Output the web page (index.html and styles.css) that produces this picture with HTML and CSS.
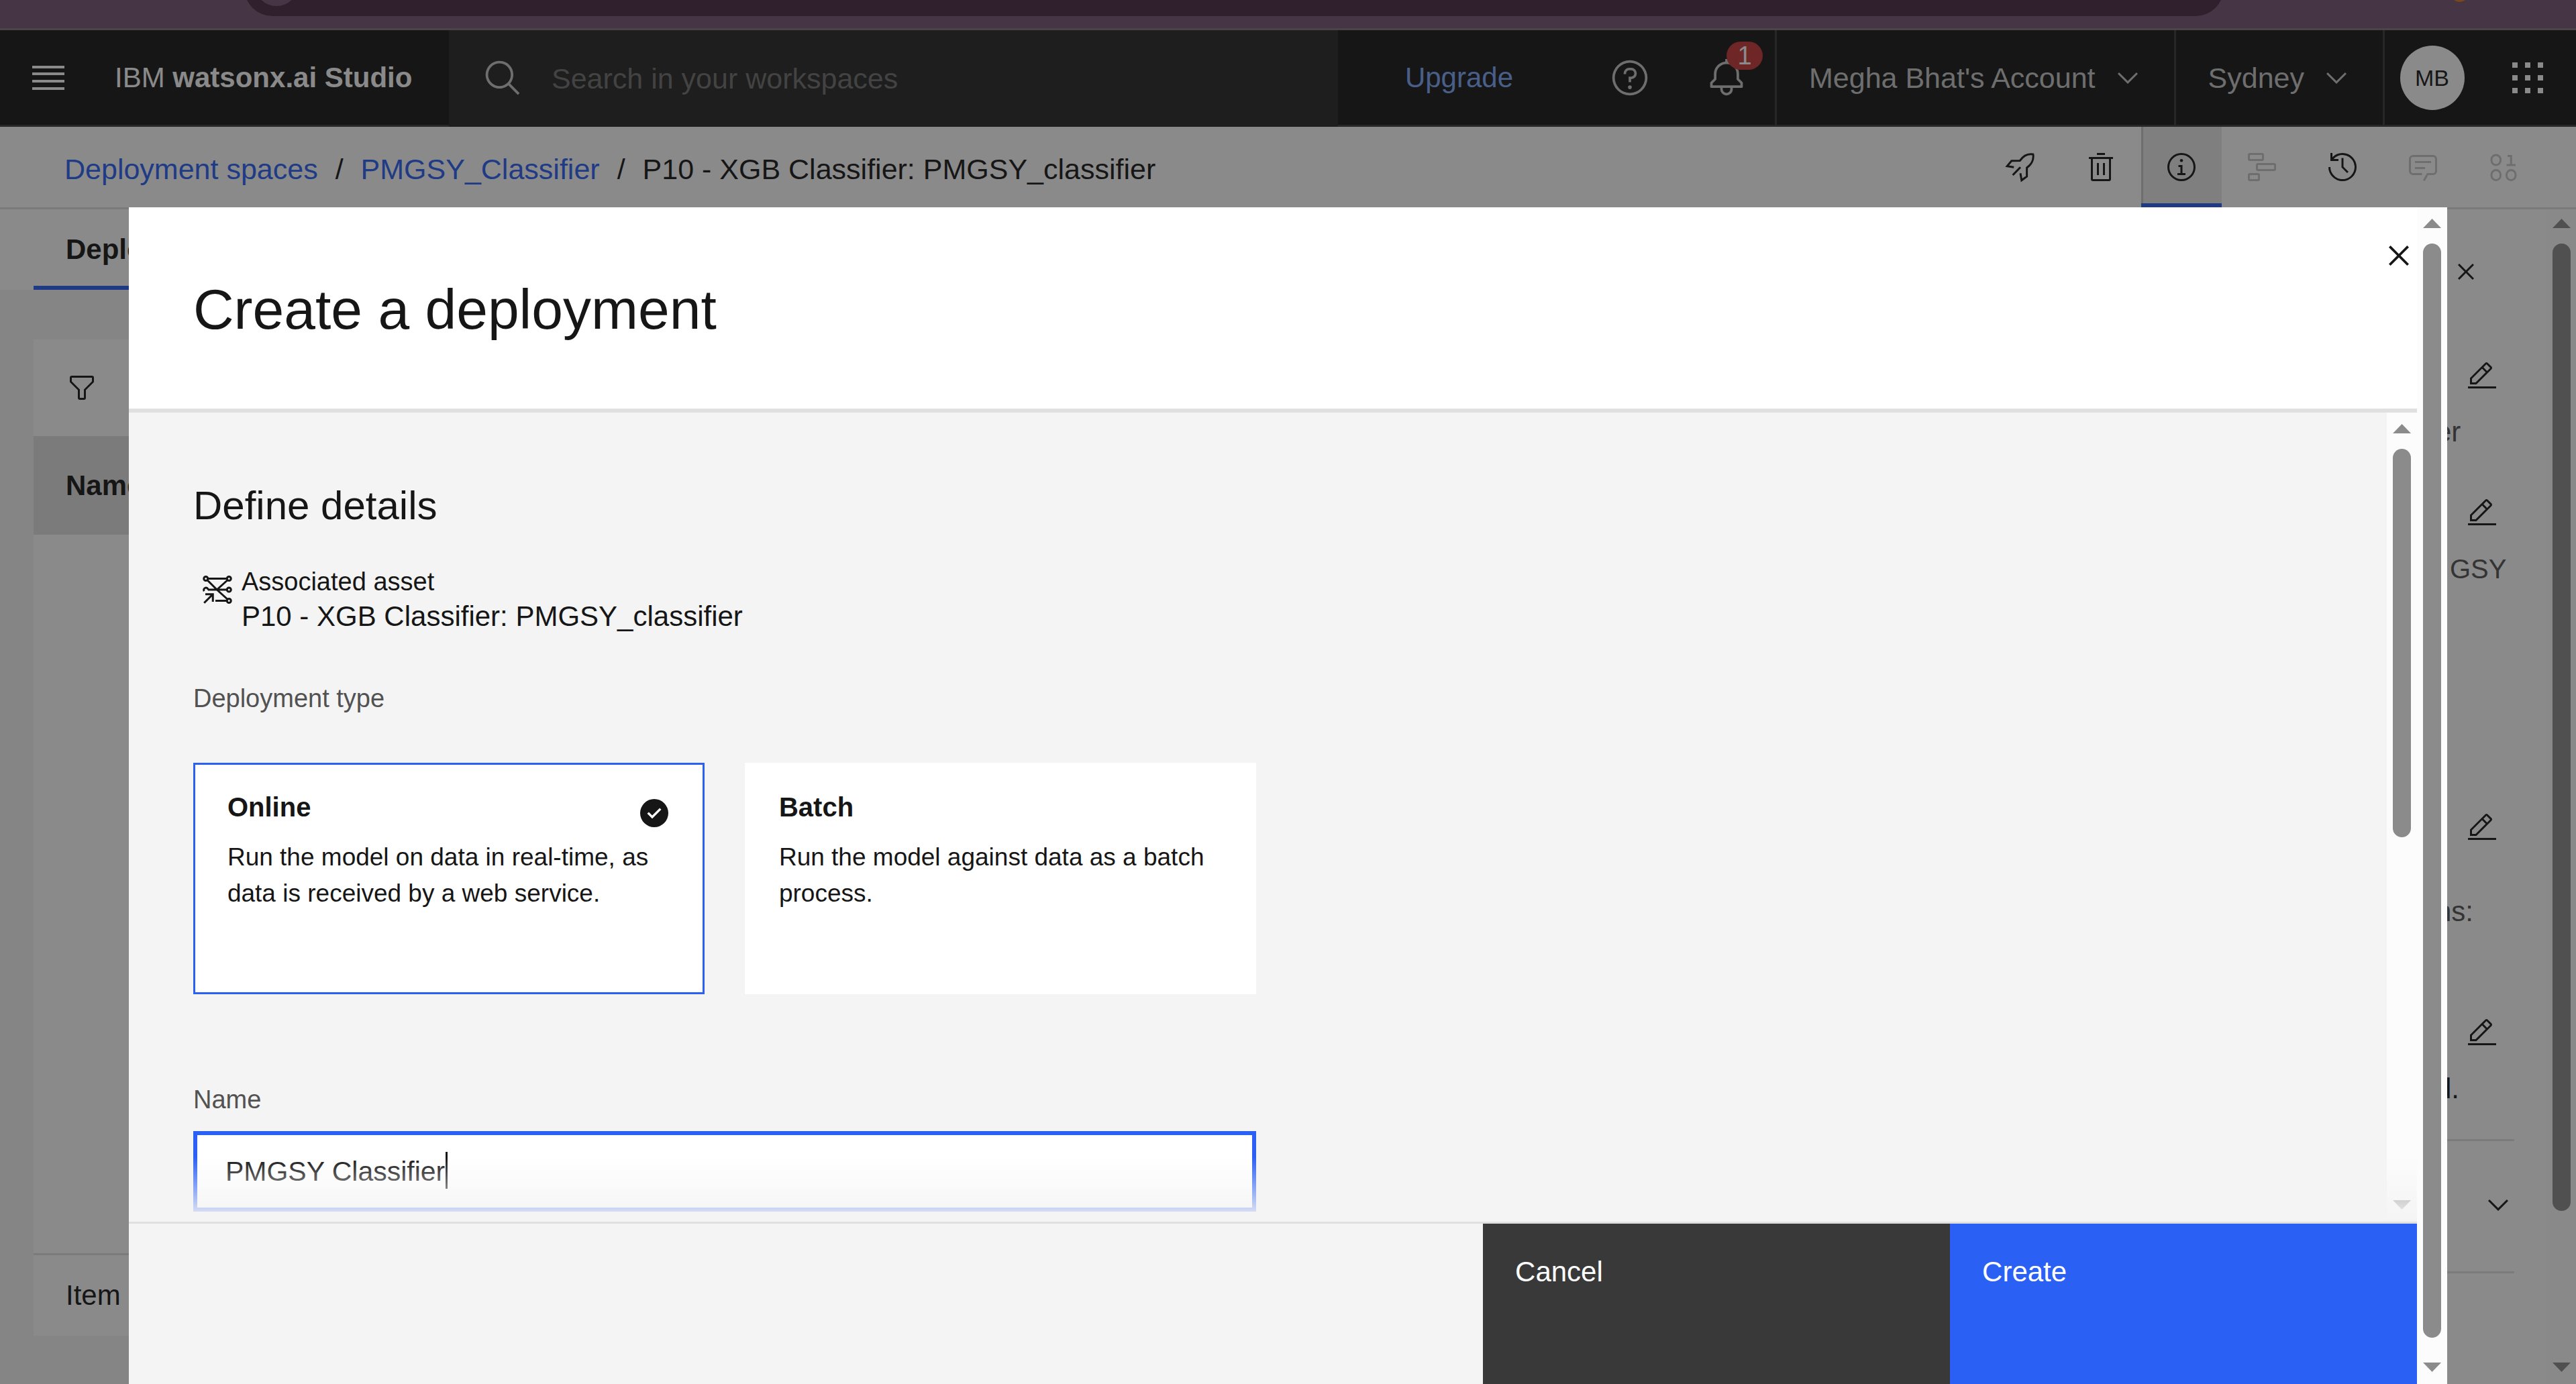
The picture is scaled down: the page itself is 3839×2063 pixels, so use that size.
FILE: index.html
```html
<!DOCTYPE html>
<html lang="en">
<head>
<meta charset="utf-8">
<title>IBM watsonx.ai Studio</title>
<link rel="stylesheet" href="styles.css">
</head>
<body>
<svg class="sprite" aria-hidden="true">
  <symbol id="i-close" viewBox="0 0 32 32"><path d="M17.4 16 24 9.4 22.6 8 16 14.6 9.4 8 8 9.4 14.6 16 8 22.6 9.4 24 16 17.4 22.6 24 24 22.6z"/></symbol>
  <symbol id="i-chevron" viewBox="0 0 32 32"><path d="M16 22 6 12 7.4 10.6 16 19.2 24.6 10.6 26 12z"/></symbol>
  <symbol id="i-edit" viewBox="0 0 32 32"><path d="M2 26h28v2H2zM25.4 9c.8-.8.8-2 0-2.8l-3.6-3.6c-.8-.8-2-.8-2.8 0l-15 15V24h6.4L25.4 9zM20.4 4 24 7.6l-3 3L17.4 7 20.4 4zM6 22v-3.6l10-10 3.6 3.6-10 10H6z"/></symbol>
</svg>

<div class="browser-strip">
  <div class="address-bar"><span class="site-chip"></span></div>
  <span class="extension-dot"></span>
</div>

<header class="header">
  <button class="icon-button" aria-label="Menu">
    <svg class="icon-lg" viewBox="0 0 60 60"><path d="M6 12h48v4H6zM6 22h48v4H6zM6 33h48v4H6zM6 44h48v4H6z"/></svg>
  </button>
  <a class="brand" href="#">IBM <b>watsonx.ai Studio</b></a>
  <label class="search">
    <svg class="icon-lg" viewBox="0 0 32 32"><path d="M29 27.586l-7.552-7.552a11.018 11.018 0 1 0-1.414 1.414L27.586 29ZM4 13a9 9 0 1 1 9 9 9.01 9.01 0 0 1-9-9Z"/></svg>
    <input class="search-input" type="search" placeholder="Search in your workspaces" aria-label="Search in your workspaces">
  </label>
  <a class="upgrade" href="#">Upgrade</a>
  <button class="icon-button muted" aria-label="Help">
    <svg class="icon-lg" viewBox="0 0 32 32"><path d="M16 2a14 14 0 1 0 14 14A14 14 0 0 0 16 2Zm0 26a12 12 0 1 1 12-12 12 12 0 0 1-12 12Z"/><circle cx="16" cy="23.5" r="1.5"/><path d="M17 8h-1.500A4.490 4.490 0 0 0 11 12.500V13h2v-.5A2.500 2.500 0 0 1 15.500 10H17a2.500 2.500 0 0 1 0 5h-2v4.500h2V17a4.500 4.500 0 0 0 0-9Z"/></svg>
  </button>
  <button class="icon-button muted" aria-label="Notifications">
    <svg class="icon-lg" viewBox="0 0 32 32"><path d="M28.700 19.300 26 16.600V13a10 10 0 0 0-9-9.950V1H15V3.050A10 10 0 0 0 6 13v3.600L3.300 19.300A1 1 0 0 0 3 20v3a1 1 0 0 0 1 1h7v.8a5.150 5.150 0 0 0 4.500 5.200A5 5 0 0 0 21 25V24h7a1 1 0 0 0 1-1V20A1 1 0 0 0 28.700 19.300ZM19 25a3 3 0 0 1-6 0V24h6Zm8-3H5V20.400L7.700 17.700A1 1 0 0 0 8 17V13a8 8 0 0 1 16 0v4a1 1 0 0 0 .3.7L27 20.400Z"/></svg>
    <span class="badge">1</span>
  </button>
  <button class="header-menu">Megha Bhat's Account <svg class="icon"><use href="#i-chevron"/></svg></button>
  <button class="header-menu">Sydney <svg class="icon"><use href="#i-chevron"/></svg></button>
  <button class="icon-button divided" aria-label="Profile"><span class="avatar">MB</span></button>
  <button class="icon-button" aria-label="App switcher">
    <svg class="icon-lg" viewBox="0 0 60 60"><path d="M7 7h8v8H7zM26 7h8v8h-8zM45 7h8v8h-8zM7 26h8v8H7zM26 26h8v8h-8zM45 26h8v8h-8zM7 45h8v8H7zM26 45h8v8h-8zM45 45h8v8h-8z"/></svg>
  </button>
</header>

<div class="toolbar">
  <nav class="breadcrumb" aria-label="Breadcrumb">
    <a href="#">Deployment spaces</a><span>/</span><a href="#">PMGSY_Classifier</a><span>/</span><span>P10 - XGB Classifier: PMGSY_classifier</span>
  </nav>
  <div class="actions">
    <button class="action" aria-label="Deploy"><svg class="icon line" viewBox="0 0 32 32"><path d="M9.500 16.200 2.800 15.100 7.200 9.800l8.400-.2C19 4.500 23.500 2.500 28.600 3.300 29.500 8.500 27 13.500 22.400 16.700v8.600L17.200 29.200 16 22.200M16 16.200 8.400 24"/></svg></button>
    <button class="action" aria-label="Delete"><svg class="icon" viewBox="0 0 32 32"><path d="M12 12h2v12h-2zM18 12h2v12h-2zM4 6v2h2v20a2 2 0 0 0 2 2h16a2 2 0 0 0 2-2V8h2V6ZM8 28V8h16v20ZM12 2h8v2h-8z"/></svg></button>
    <button class="action selected" aria-label="Information"><svg class="icon" viewBox="0 0 32 32"><path d="M17 22v-8h-4v2h2v6h-3v2h8v-2zM16 2a14 14 0 1 0 14 14A14 14 0 0 0 16 2Zm0 26a12 12 0 1 1 12-12 12 12 0 0 1-12 12Z"/><circle cx="16" cy="9.5" r="1.5"/></svg></button>
    <button class="action" disabled aria-label="Lineage"><svg class="icon line" viewBox="0 0 32 32"><rect x="3" y="3" width="14" height="6" rx="1"/><rect x="11" y="13" width="18" height="6" rx="1"/><rect x="3" y="23" width="10" height="6" rx="1"/></svg></button>
    <button class="action" aria-label="History"><svg class="icon" viewBox="0 0 32 32"><path d="M20.600 22 15 16.400V7h2v8.600l5 5zM16 2A13.900 13.900 0 0 0 6 6.200V2H4v8h8V8H7.100A12 12 0 1 1 4 16H2A14 14 0 1 0 16 2Z"/></svg></button>
    <button class="action" disabled aria-label="Comments"><svg class="icon" viewBox="0 0 32 32"><path d="M17.740 30 16 29l4-7h6a2 2 0 0 0 2-2V8a2 2 0 0 0-2-2H6A2 2 0 0 0 4 8V20a2 2 0 0 0 2 2h9v2H6a4 4 0 0 1-4-4V8A4 4 0 0 1 6 4H26a4 4 0 0 1 4 4V20a4 4 0 0 1-4 4H21.160ZM8 10h16v2H8zM8 16h10v2H8z"/></svg></button>
    <button class="action" disabled aria-label="Data"><svg class="icon line" viewBox="0 0 32 32"><rect x="4" y="4" width="9" height="10" rx="4.500"/><rect x="4" y="19" width="9" height="10" rx="4.500"/><rect x="19" y="19" width="9" height="10" rx="4.500"/><path d="M20 5h3.500v9M19 14h9"/></svg></button>
  </div>
</div>

<main class="workspace">
  <section class="deployments">
    <div class="tabs" role="tablist"><button class="tab" role="tab" aria-selected="true">Deployments</button></div>
    <div class="list">
      <div class="list-tools"><button class="filter" aria-label="Filter"><svg class="icon" viewBox="0 0 32 32"><path d="M18 28H14a2 2 0 0 1-2-2V18.400L4.600 11A2 2 0 0 1 4 9.600V6A2 2 0 0 1 6 4H26a2 2 0 0 1 2 2V9.600A2 2 0 0 1 27.400 11L20 18.400V26A2 2 0 0 1 18 28ZM6 6V9.600l8 8V26h4V17.600l8-8V6Z"/></svg></button></div>
      <table class="list-table"><thead><tr><th scope="col">Name</th></tr></thead></table>
      <div class="pagination">Item</div>
    </div>
  </section>
  <aside class="info">
    <button class="info-close" aria-label="Close panel"><svg class="icon"><use href="#i-close"/></svg></button>
    <div class="info-item"><button class="edit" aria-label="Edit name"><svg class="icon"><use href="#i-edit"/></svg></button><p>er</p></div>
    <div class="info-item tall"><button class="edit" aria-label="Edit description"><svg class="icon"><use href="#i-edit"/></svg></button><p class="wrapped">GSY</p></div>
    <div class="info-item roomy"><button class="edit" aria-label="Edit details"><svg class="icon"><use href="#i-edit"/></svg></button><p>ns:</p></div>
    <div class="info-item last"><button class="edit" aria-label="Edit tags"><svg class="icon"><use href="#i-edit"/></svg></button><p class="strong">d.</p></div>
    <button class="info-section" aria-label="Expand section"><svg class="icon"><use href="#i-chevron"/></svg></button>
  </aside>
  <div class="scrollbar dark" aria-hidden="true"><i class="up"></i><i class="thumb thumb-page"></i><i class="rest rest-page"></i><i class="down"></i></div>
</main>

<div class="overlay">
  <div class="modal" role="dialog" aria-modal="true" aria-labelledby="modal-title">
    <div class="modal-main">
      <header class="modal-header">
        <h1 id="modal-title">Create a deployment</h1>
        <button class="modal-close" aria-label="Close"><svg class="icon-lg"><use href="#i-close"/></svg></button>
      </header>
      <div class="modal-body">
        <form class="form" id="deploy-form">
          <h2>Define details</h2>
          <div class="asset">
            <svg class="icon line" viewBox="0 0 32 32"><circle cx="4.500" cy="5" r="2"/><circle cx="27.500" cy="5" r="2"/><circle cx="27.500" cy="16" r="2"/><circle cx="27.500" cy="27" r="2"/><path d="M6.500 5h19M6 6.500 15.500 16 26 6.500M6.500 16h19M15.500 16 26 25.500M14 27h11.500M2.800 17.500A2.200 2.200 0 1 1 6.800 16M4 20.500h7.500V28M11.500 20.500 2.800 29.200"/></svg>
            <div><p class="asset-label">Associated asset</p><p class="asset-name">P10 - XGB Classifier: PMGSY_classifier</p></div>
          </div>
          <fieldset class="types">
            <legend class="label">Deployment type</legend>
            <div class="cards">
              <label class="card">
                <input class="card-radio" type="radio" name="type" checked>
                <span class="card-title">Online</span>
                <span class="card-text">Run the model on data in real-time, as data is received by a web service.</span>
                <svg class="icon card-check" viewBox="0 0 32 32"><path fill-rule="evenodd" d="M16 2a14 14 0 1 0 14 14A14 14 0 0 0 16 2Zm-2 19.500L9 16.540 10.590 15 14 18.350 21.410 11 23 12.580z"/></svg>
              </label>
              <label class="card">
                <input class="card-radio" type="radio" name="type">
                <span class="card-title">Batch</span>
                <span class="card-text">Run the model against data as a batch process.</span>
                <svg class="icon card-check" viewBox="0 0 32 32"><circle cx="16" cy="16" r="14"/></svg>
              </label>
            </div>
          </fieldset>
          <label class="label name-label" for="name">Name</label>
          <div class="name-field">
            <input class="name-input" id="name" type="text" value="PMGSY Classifier">
            <span class="caret"></span>
          </div>
        </form>
        <div class="scrollbar" aria-hidden="true"><i class="up"></i><i class="thumb thumb-form"></i><i class="rest rest-form"></i><i class="down"></i></div>
        <div class="fade"></div>
      </div>
      <footer class="modal-footer">
        <button class="footer-button cancel" type="button">Cancel</button>
        <button class="footer-button create" type="submit" form="deploy-form">Create</button>
      </footer>
    </div>
    <div class="scrollbar" aria-hidden="true"><i class="up"></i><i class="thumb thumb-modal"></i><i class="rest rest-modal"></i><i class="down"></i></div>
  </div>
</div>
</body>
</html>
```
FILE: styles.css
```css
* { box-sizing: border-box; }

html, body { margin: 0; height: 100%; }

body {
  display: flex;
  flex-direction: column;
  overflow: hidden;
  background: #fff;
  color: #161616;
  font-family: "Liberation Sans", Arial, sans-serif;
  font-size: 42px;
  line-height: 54px;
}

h1, h2, p, fieldset, legend { margin: 0; padding: 0; border: 0; font-weight: 400; }
button, input { margin: 0; padding: 0; border: 0; border-radius: 0; background: none; color: inherit; font: inherit; }
a { color: inherit; text-decoration: none; }

.sprite { position: absolute; width: 0; height: 0; }
.icon, .icon-lg { display: block; flex: none; fill: currentColor; }
.icon { width: 48px; height: 48px; }
.icon-lg { width: 60px; height: 60px; }
.line { fill: none; stroke: currentColor; stroke-width: 2; }

/* Browser edge */
.browser-strip {
  display: flex;
  flex: none;
  justify-content: space-between;
  height: 45px;
  padding: 0 161px 0 364px;
  overflow: hidden;
  border-bottom: 3px solid #7e747c;
  background: #765472;
}
.address-bar { flex: 1; height: 84px; margin: -60px 339px 0 0; border-radius: 42px; background: #4a2a46; }
.site-chip { display: block; width: 66px; height: 66px; margin: 3px 0 0 15px; border-radius: 50%; background: #765472; }
.extension-dot { width: 25px; height: 24px; margin-top: -21px; border-radius: 50%; background: #e07a1c; }

/* Product header */
.header {
  display: flex;
  flex: none;
  align-items: stretch;
  height: 144px;
  border-bottom: 3px solid #393939;
  background: #161616;
  color: #fff;
}
.icon-button { position: relative; display: grid; place-items: center; width: 144px; }
.muted { color: #c6c6c6; }
.brand { width: 525px; padding-left: 27px; line-height: 141px; white-space: nowrap; }
.search { display: flex; flex: 1; align-items: center; gap: 42px; margin-bottom: -3px; padding: 0 51px; background: #262626; color: #c6c6c6; }
.search-input { flex: 1; height: 60px; outline: 0; font-size: 43px; }
.search-input::placeholder { color: #707070; opacity: 1; }
.upgrade { margin: 0 102px 0 100px; color: #7ea8fb; line-height: 141px; }
.badge {
  position: absolute;
  top: 17px;
  right: 18px;
  width: 54px;
  height: 42px;
  border-radius: 21px;
  background: #c83638;
  color: #fff;
  font-size: 38px;
  line-height: 42px;
  text-align: center;
}
.header-menu { display: flex; align-items: center; gap: 24px; padding: 0 45px 0 48px; border-left: 3px solid #393939; color: #c6c6c6; font-size: 43px; }
.divided { border-left: 3px solid #393939; }
.avatar { width: 96px; height: 96px; border-radius: 50%; background: #fff; color: #161616; font-size: 34px; line-height: 96px; text-align: center; }

/* Breadcrumb and actions */
.toolbar { display: flex; flex: none; justify-content: space-between; height: 123px; padding: 0 48px 0 96px; border-bottom: 3px solid #e0e0e0; }
.breadcrumb { display: flex; gap: 26px; padding-top: 36px; font-size: 43px; }
.breadcrumb a { color: #2b60f5; }
.actions { display: flex; }
.action { display: grid; place-items: center; width: 120px; }
.action:disabled { color: #c6c6c6; }
.selected { padding-top: 6px; border-bottom: 6px solid #2b60f5; background: #e8e8e8; box-shadow: inset 3px 0 #c6c6c6; }

/* Page below the dialog */
.workspace { display: flex; flex: 1; min-height: 0; }
.deployments { display: flex; flex: 1; flex-direction: column; padding-bottom: 72px; background: #f4f4f4; }
.tabs { padding-left: 50px; background: #fff; }
.tab { height: 120px; padding: 6px 48px 0; border-bottom: 6px solid #2b60f5; font-weight: 700; }
.list { display: flex; flex: 1; flex-direction: column; margin: 74px 48px 0 50px; background: #fff; }
.list-tools { display: flex; align-items: center; height: 144px; padding-left: 48px; }
.list-table { width: 100%; border-collapse: collapse; }
.list-table th { height: 147px; padding: 0 48px; background: #e0e0e0; text-align: left; }
.pagination { margin-top: auto; padding: 33px 48px; border-top: 3px solid #e0e0e0; }

.info { width: 255px; padding: 69px 48px 0 90px; color: #525252; }
.info-close { display: block; margin: 0 0 108px 21px; color: #161616; }
.info-item { height: 204px; }
.info-item p { margin-top: 32px; }
.info-item .wrapped { padding-left: 21px; font-size: 40px; }
.edit { display: block; margin-left: 45px; color: #161616; }
.tall { height: 469px; }
.roomy { height: 306px; }
.info-item.roomy p { margin-top: 74px; }
.last { height: 182px; }
.info-item .strong { color: #161616; }
.info-section { display: flex; align-items: center; justify-content: flex-end; width: 117px; height: 200px; padding-bottom: 4px; border: solid #e0e0e0; border-width: 3px 0; color: #161616; }

/* Scrollbars */
.scrollbar { display: flex; flex: none; flex-direction: column; width: 45px; padding: 17px 9px 18px; background: #fcfcfc; color: #8b8b8b; }
.dark { width: 44px; padding: 14px 8px 18px 9px; }
.up, .down { width: 27px; height: 14px; background: currentColor; }
.up { margin-bottom: 23px; clip-path: polygon(50% 0, 100% 100%, 0 100%); }
.down { margin-top: 23px; clip-path: polygon(0 0, 100% 0, 50% 100%); }
.thumb { border-radius: 14px; background: currentColor; }
.thumb-page { flex: 1443; }
.rest-page { flex: 203; }
.thumb-modal { flex: 1632; }
.rest-modal { flex: 14; }
.thumb-form { flex: 579; }
.rest-form { flex: 518; }

/* Dialog */
.overlay { position: fixed; inset: 0; display: flex; padding: 309px 5% 0; background: rgba(22, 22, 22, 0.5); }
.modal { display: flex; flex: 1; background: #f4f4f4; }
.modal-main { display: flex; flex: 1; flex-direction: column; }
.modal-header { display: flex; flex: none; justify-content: space-between; height: 306px; border-bottom: 6px solid #e0e0e0; background: #fff; }
.modal-header h1 { padding: 98px 0 0 96px; font-size: 84px; line-height: 108px; }
.modal-close { display: flex; align-items: center; width: 57px; height: 144px; }
.modal-body { position: relative; display: flex; flex: 1; min-height: 0; overflow: hidden; }
.form { flex: 1; padding: 103px 96px 0; }
.form h2 { font-size: 60px; line-height: 72px; }
.asset { display: flex; gap: 12px; padding: 52px 12px 73px; line-height: 51px; }
.asset .icon { margin-top: 13px; }
.asset-label { font-size: 38px; }
.types { width: 1584px; max-width: 100%; }
.label { display: block; color: #525252; font-size: 38px; line-height: 48px; }
.cards { display: grid; grid-template-columns: 1fr 1fr; gap: 60px; padding-top: 72px; }
.card { position: relative; height: 345px; padding: 36px 48px; border: 3px solid #fff; background: #fff; }
.card:has(:checked) { border-color: #2b60f5; }
.card-radio { position: absolute; opacity: 0; }
.card-title { display: block; font-size: 40px; font-weight: 700; }
.card-text { display: block; padding-top: 21px; font-size: 37px; }
.card-check { position: absolute; top: 48px; right: 48px; visibility: hidden; }
.card-radio:checked ~ .card-check { visibility: visible; }
.name-label { margin: 133px 0 23px; }
.name-field { position: relative; width: 1584px; max-width: 100%; }
.name-input { display: block; width: 100%; height: 120px; padding: 0 42px; border: 6px solid #2b60f5; outline: 0; background: #fff; font-size: 41px; }
.caret { position: absolute; top: 31px; left: 376px; width: 3px; height: 55px; background: #161616; }
.fade { position: absolute; right: 0; bottom: 0; left: 0; height: 96px; background: linear-gradient(rgba(244, 244, 244, 0), #f4f4f4); pointer-events: none; }
.modal-footer { display: flex; flex: none; justify-content: flex-end; height: 242px; border-top: 3px solid #e0e0e0; }
.footer-button { display: flex; width: 696px; padding: 45px 48px; color: #fff; }
.cancel { background: #393939; }
.create { background: #2b60f5; }
```
